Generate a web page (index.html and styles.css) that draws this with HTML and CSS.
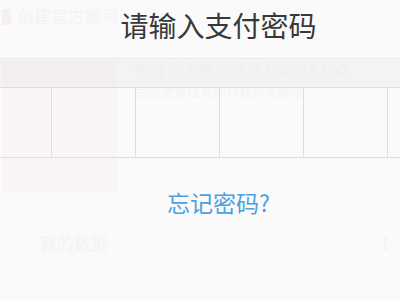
FILE: index.html
```html
<!DOCTYPE html>
<html lang="zh-CN">
<head>
  <meta charset="UTF-8">
  <title>请输入支付密码</title>
  <link rel="stylesheet" href="styles.css">
</head>
<body>
  <!-- 背后的页面 -->
  <div class="page">
    <div class="ghost-head"><span class="ghost-dot"></span>创建官方账号</div>
    <div class="ghost-main">
      <div class="ghost-card"></div>
      <div class="ghost-info">
        <p class="ghost-line">创建官方账号成就 096/25 100</p>
        <p class="ghost-sub">完成更多任务即可获得奖励哦</p>
      </div>
    </div>
    <div class="ghost-row">
      <span>我的数据</span>
      <span>1</span>
    </div>
  </div>

  <!-- 支付密码弹窗 -->
  <div class="dialog">
    <div class="dialog-title">请输入支付密码</div>
    <div class="dialog-gap"></div>
    <div class="pwd-box">
      <div class="pwd-cell"></div>
      <div class="pwd-cell"></div>
      <div class="pwd-cell"></div>
      <div class="pwd-cell"></div>
      <div class="pwd-cell"></div>
      <div class="pwd-cell"></div>
    </div>
    <div class="forgot">忘记密码?</div>
  </div>
</body>
</html>
```

FILE: styles.css
```css
html, body {
  margin: 0;
  padding: 0;
}

body {
  width: 400px;
  height: 300px;
  overflow: hidden;
  position: relative;
  background: #fafafa;
  font-family: "Noto Sans CJK SC", "Noto Sans", sans-serif;
}

.page {
  height: 100%;
}

.ghost-head {
  height: 58px;
  padding: 4px 0 0 2px;
  box-sizing: border-box;
  display: flex;
  align-items: flex-start;
  gap: 6px;
  font-size: 17px;
  line-height: 24px;
  color: #f2f3f8;
}

.ghost-dot {
  width: 9px;
  height: 16px;
  margin-top: 5px;
  background: #f7eef1;
}

.ghost-main {
  display: flex;
  height: 135px;
  background: linear-gradient(#f3f3f3 0 29px, transparent 29px);
}

.ghost-card {
  width: 115px;
  height: 133px;
  margin: 2px 0 0 2px;
  background: rgba(246, 226, 228, 0.22);
}

.ghost-info {
  padding-left: 18px;
}

.ghost-info p {
  margin: 0;
}

.ghost-line {
  font-size: 16px;
  line-height: 24px;
  color: #efefef;
}

.ghost-sub {
  font-size: 13px;
  line-height: 18px;
  color: #f4f4f4;
}

.ghost-row {
  display: flex;
  justify-content: space-between;
  margin-top: 35px;
  padding: 0 10px 0 40px;
  font-size: 17px;
  line-height: 30px;
  color: #f3f3f3;
}

.dialog {
  position: absolute;
  top: 0;
  left: 0;
  right: 0;
  bottom: 0;
  text-align: center;
}

.dialog-title {
  height: 58px;
  padding-left: 37px;
  line-height: 50px;
  font-size: 28px;
  color: #383838;
  border-bottom: 1px solid #e9e9e9;
}

.dialog-gap {
  height: 28px;
}

.pwd-box {
  display: grid;
  grid-template-columns: 51px repeat(4, 84px) 1fr;
  border-top: 1px solid #dedede;
  border-bottom: 1px solid #dedede;
}

.pwd-cell {
  height: 69px;
  border-left: 1px solid #dedede;
}

.pwd-cell:first-child {
  border-left: none;
}

.forgot {
  margin-top: 29px;
  padding-left: 37px;
  font-size: 23px;
  line-height: 30px;
  color: #4d9fe0;
}
```
